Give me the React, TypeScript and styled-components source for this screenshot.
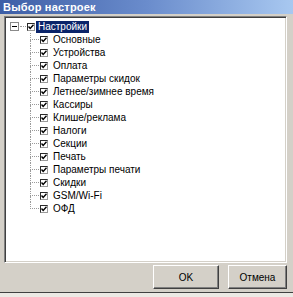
import React from "react";
import styled, { createGlobalStyle } from "styled-components";

const GlobalStyle = createGlobalStyle`
  html, body {
    margin: 0;
    padding: 0;
    background: #ece9e4;
  }
  body {
    font-family: "Liberation Sans", Arial, sans-serif;
    font-size: 10px;
    color: #000;
  }
`;

const Window = styled.div`
  width: 293px;
  height: 292px;
  background: #d4d0c8;
  border-bottom: 1px solid #404040;
  display: flex;
  flex-direction: column;
`;

const TitleBar = styled.div`
  height: 14px;
  display: flex;
  align-items: center;
  padding-left: 3px;
  background: linear-gradient(to right, #3d5ea6, #6a8ccc 50%, #a8c8f0);
  color: #fff;
  font-weight: bold;
  font-size: 11px;
  letter-spacing: 0.2px;
`;

const Body = styled.div`
  flex: 1;
  display: flex;
  flex-direction: column;
  padding: 2px 6px 0 4px;
`;

const TreeBox = styled.div`
  height: 242px;
  background: #fff;
  border-top: 1px solid #808080;
  border-left: 1px solid #808080;
  border-right: 1px solid #fff;
  border-bottom: 1px solid #fff;
  box-shadow: inset 1px 1px 0 #404040, inset -1px -1px 0 #d4d0c8;
  padding-top: 3px;
  padding-left: 2px;
`;

const Row = styled.div<{ $indent: number }>`
  height: 13px;
  display: flex;
  align-items: center;
  padding-left: ${(p) => p.$indent}px;
  white-space: nowrap;
`;

const Expander = styled.div`
  width: 9px;
  height: 9px;
  box-sizing: border-box;
  border: 1px solid #8a8a8a;
  background: #fff;
  display: flex;
  align-items: center;
  justify-content: center;

  &::after {
    content: "";
    width: 5px;
    height: 1px;
    background: #000;
  }
`;

const Stub = styled.div`
  width: 6px;
  margin: 0 0 0 1px;
  border-top: 1px dotted #9a9a9a;
`;

const Guide = styled.div`
  width: 9px;
  height: 13px;
  display: flex;
  flex-direction: column;
`;

const GuideTop = styled.div`
  height: 6px;
  border-left: 1px dotted #9a9a9a;
  border-bottom: 1px dotted #9a9a9a;
`;

const GuideBottom = styled.div<{ $last: boolean }>`
  flex: 1;
  border-left: 1px ${(p) => (p.$last ? "none" : "dotted")} #9a9a9a;
`;

const Check = styled.div`
  width: 8px;
  height: 8px;
  box-sizing: border-box;
  border: 1px solid #2a2a2a;
  border-right-color: #9a9a9a;
  border-bottom-color: #9a9a9a;
  background: #fff;
  margin-left: 1px;
  display: flex;
  align-items: center;
  justify-content: center;
  flex-shrink: 0;
`;

const Label = styled.span<{ $selected?: boolean }>`
  display: inline-block;
  margin-left: ${(p) => (p.$selected ? 1 : 3)}px;
  padding: 0 2px;
  line-height: 12px;
  height: 12px;
  background: ${(p) => (p.$selected ? "#0a246a" : "transparent")};
  color: ${(p) => (p.$selected ? "#fff" : "#000")};
`;

const ButtonRow = styled.div`
  display: flex;
  justify-content: flex-end;
  gap: 9px;
  margin-top: 2px;
`;

const Button = styled.button<{ $w: number }>`
  width: ${(p) => p.$w}px;
  height: 24px;
  padding: 0;
  background: #d4d0c8;
  font-family: "Liberation Sans", Arial, sans-serif;
  font-size: 10px;
  color: #000;
  border-top: 1px solid #fff;
  border-left: 1px solid #fff;
  border-right: 1px solid #404040;
  border-bottom: 1px solid #404040;
  box-shadow: inset -1px -1px 0 #808080;
`;

const CheckMark = () => (
  <svg width="6" height="6" viewBox="0 0 6 6">
    <path d="M0.5 2.5 L2.2 4.5 L5.5 0.8" stroke="#000" strokeWidth="1.4" fill="none" />
  </svg>
);

const items = [
  "Основные",
  "Устройства",
  "Оплата",
  "Параметры скидок",
  "Летнее/зимнее время",
  "Кассиры",
  "Клише/реклама",
  "Налоги",
  "Секции",
  "Печать",
  "Параметры печати",
  "Скидки",
  "GSM/Wi-Fi",
  "ОФД",
];

export default function App() {
  return (
    <>
      <GlobalStyle />
      <Window>
        <TitleBar>Выбор настроек</TitleBar>
        <Body>
          <TreeBox>
            <Row $indent={3}>
              <Expander />
              <Stub />
              <Check>
                <CheckMark />
              </Check>
              <Label $selected>Настройки</Label>
            </Row>
            {items.map((name, i) => (
              <Row key={name} $indent={23}>
                <Guide>
                  <GuideTop />
                  <GuideBottom $last={i === items.length - 1} />
                </Guide>
                <Check>
                  <CheckMark />
                </Check>
                <Label>{name}</Label>
              </Row>
            ))}
          </TreeBox>
          <ButtonRow>
            <Button $w={66}>OK</Button>
            <Button $w={59}>Отмена</Button>
          </ButtonRow>
        </Body>
      </Window>
    </>
  );
}
